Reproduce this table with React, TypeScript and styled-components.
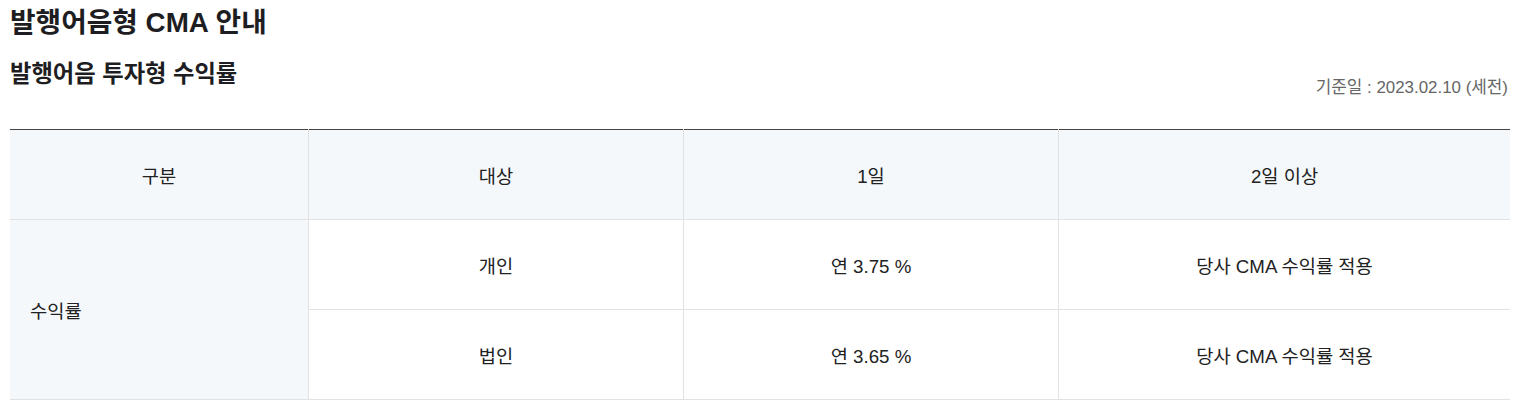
import React from "react";
import styled, { createGlobalStyle } from "styled-components";

const Global = createGlobalStyle`
  html, body { margin: 0; padding: 0; background: #fff; }
  body { font-family: "Liberation Sans", "Noto Sans CJK KR", sans-serif; color: #222; }
`;

const Page = styled.div`
  padding: 0 10px;
`;

const Title = styled.h2`
  margin: 0;
  font-size: 27.8px;
  line-height: 46px;
  font-weight: 700;
  color: #1d1d22;
`;

const SubHead = styled.div`
  display: flex;
  justify-content: space-between;
  align-items: flex-start;
  margin-top: 13px;
  padding-bottom: 31px;
`;

const SubTitle = styled.h3`
  margin: 0;
  font-size: 23.3px;
  line-height: 30px;
  font-weight: 700;
  color: #1d1d22;
`;

const BaseDate = styled.span`
  margin-top: 19px;
  margin-right: 2px;
  font-size: 16.9px;
  line-height: 20px;
  color: #666;
`;

const Table = styled.table`
  width: 100%;
  border-collapse: collapse;
  table-layout: fixed;
  border-top: 1px solid #444;
`;

const Th = styled.th`
  height: 89px;
  padding: 0;
  background: #f5f8fb;
  border: 1px solid #e2e2e2;
  border-top: none;
  font-size: 18.7px;
  font-weight: 400;
  color: #222;
  text-align: center;
  &:first-child { border-left: none; }
  &:last-child { border-right: none; }
`;

const Td = styled.td<{ $head?: boolean }>`
  height: 89px;
  border: 1px solid #e2e2e2;
  font-size: 18.7px;
  color: #222;
  text-align: ${(p) => (p.$head ? "left" : "center")};
  padding: ${(p) => (p.$head ? "0 20px" : "0")};
  background: ${(p) => (p.$head ? "#f5f8fb" : "#fff")};
  &:first-child { border-left: none; }
  &:last-child { border-right: none; }
`;

const rows = [
  { target: "개인", day1: "연 3.75 %", day2: "당사 CMA 수익률 적용" },
  { target: "법인", day1: "연 3.65 %", day2: "당사 CMA 수익률 적용" },
];

export default function App() {
  return (
    <>
      <Global />
      <Page>
        <Title>발행어음형 CMA 안내</Title>
        <SubHead>
          <SubTitle>발행어음 투자형 수익률</SubTitle>
          <BaseDate>기준일 : 2023.02.10 (세전)</BaseDate>
        </SubHead>
        <Table>
          <colgroup>
            <col style={{ width: "19.9%" }} />
            <col style={{ width: "25%" }} />
            <col style={{ width: "25%" }} />
            <col />
          </colgroup>
          <thead>
            <tr>
              <Th>구분</Th>
              <Th>대상</Th>
              <Th>1일</Th>
              <Th>2일 이상</Th>
            </tr>
          </thead>
          <tbody>
            {rows.map((r, i) => (
              <tr key={r.target}>
                {i === 0 && (
                  <Td $head rowSpan={rows.length}>
                    수익률
                  </Td>
                )}
                <Td>{r.target}</Td>
                <Td>{r.day1}</Td>
                <Td>{r.day2}</Td>
              </tr>
            ))}
          </tbody>
        </Table>
      </Page>
    </>
  );
}
